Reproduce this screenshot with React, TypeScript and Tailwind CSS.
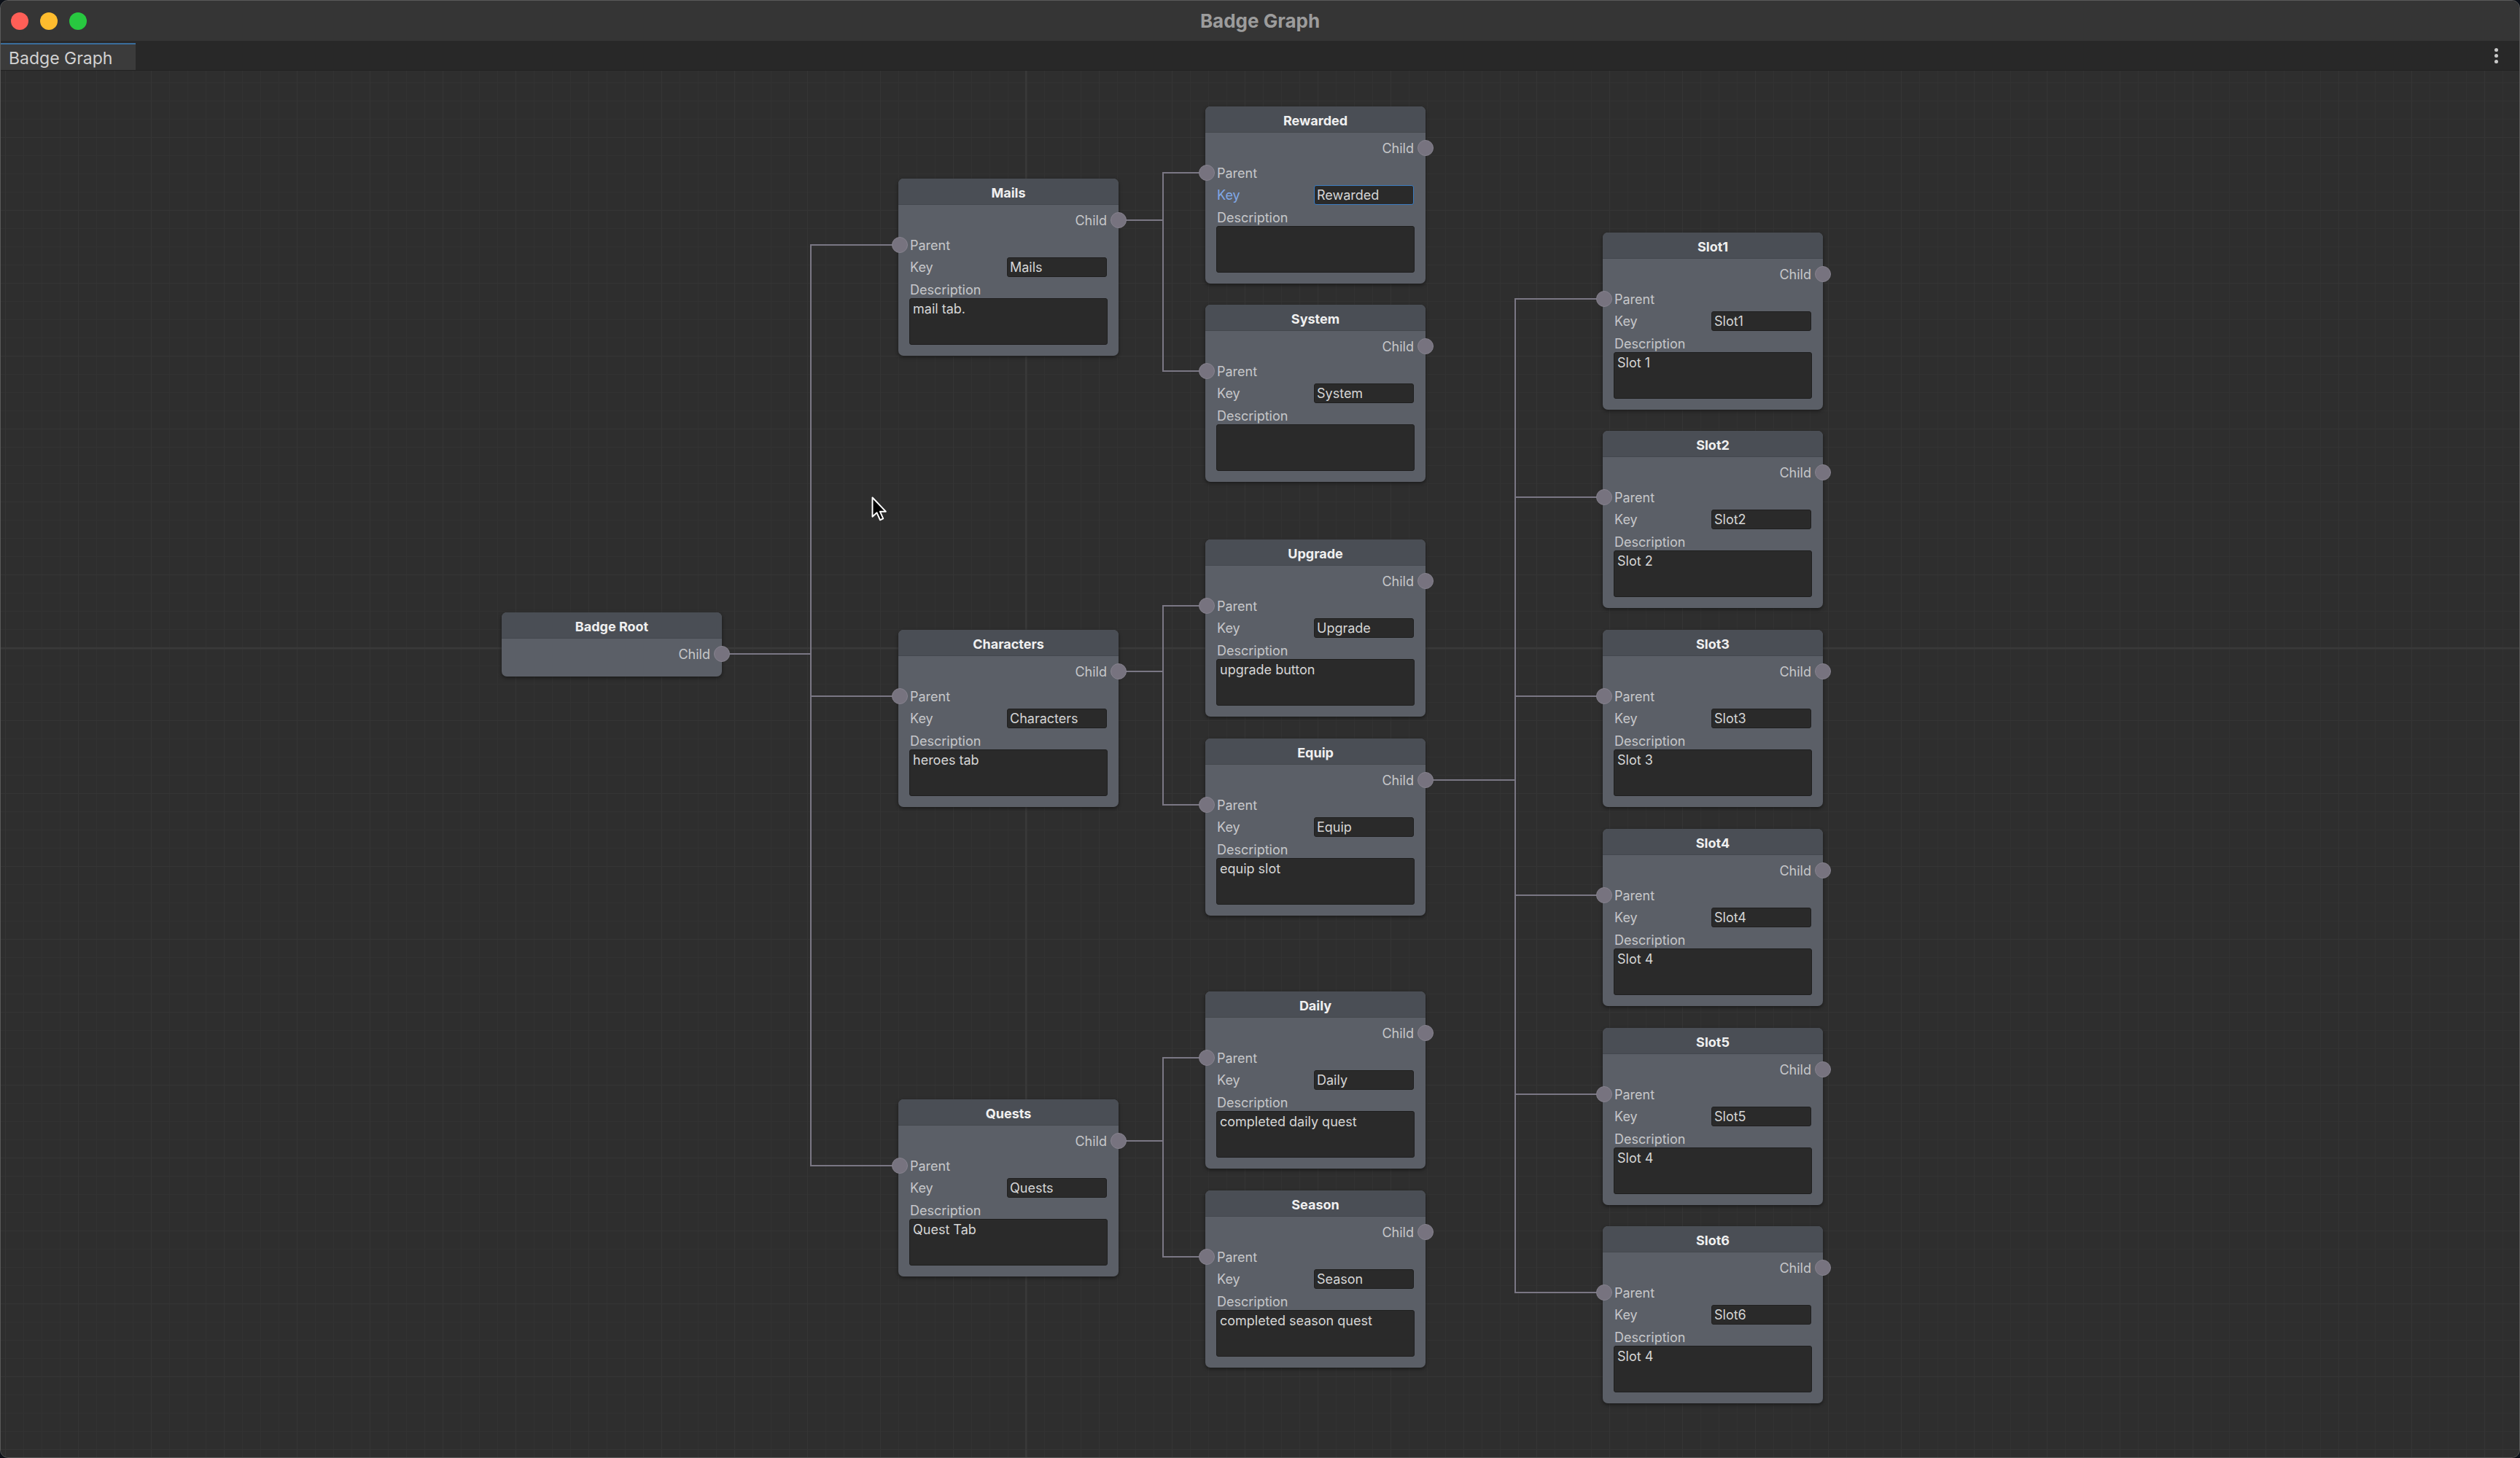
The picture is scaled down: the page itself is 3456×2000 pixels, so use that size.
import React from "react";

type GraphNode = {
  title: string;
  x: number;
  y: number;
  keyValue?: string;
  desc?: string;
  focused?: boolean;
  root?: boolean;
};

const CANVAS_TOP = 97;

const nodes: GraphNode[] = [
  { title: "Badge Root", x: 687, y: 840, root: true },
  { title: "Mails", x: 1231, y: 245, keyValue: "Mails", desc: "mail tab." },
  { title: "Characters", x: 1231, y: 864, keyValue: "Characters", desc: "heroes tab" },
  { title: "Quests", x: 1231, y: 1508, keyValue: "Quests", desc: "Quest Tab" },
  { title: "Rewarded", x: 1652, y: 146, keyValue: "Rewarded", desc: "", focused: true },
  { title: "System", x: 1652, y: 418, keyValue: "System", desc: "" },
  { title: "Upgrade", x: 1652, y: 740, keyValue: "Upgrade", desc: "upgrade button" },
  { title: "Equip", x: 1652, y: 1013, keyValue: "Equip", desc: "equip slot" },
  { title: "Daily", x: 1652, y: 1360, keyValue: "Daily", desc: "completed daily quest" },
  { title: "Season", x: 1652, y: 1633, keyValue: "Season", desc: "completed season quest" },
  { title: "Slot1", x: 2197, y: 319, keyValue: "Slot1", desc: "Slot 1" },
  { title: "Slot2", x: 2197, y: 591, keyValue: "Slot2", desc: "Slot 2" },
  { title: "Slot3", x: 2197, y: 864, keyValue: "Slot3", desc: "Slot 3" },
  { title: "Slot4", x: 2197, y: 1137, keyValue: "Slot4", desc: "Slot 4" },
  { title: "Slot5", x: 2197, y: 1410, keyValue: "Slot5", desc: "Slot 4" },
  { title: "Slot6", x: 2197, y: 1682, keyValue: "Slot6", desc: "Slot 4" },
];

// parent title -> children titles
const links: [string, string[]][] = [
  ["Badge Root", ["Mails", "Characters", "Quests"]],
  ["Mails", ["Rewarded", "System"]],
  ["Characters", ["Upgrade", "Equip"]],
  ["Quests", ["Daily", "Season"]],
  ["Equip", ["Slot1", "Slot2", "Slot3", "Slot4", "Slot5", "Slot6"]],
];

const byTitle = (t: string) => nodes.find((n) => n.title === t)!;

function Port({ side, top }: { side: "left" | "right"; top: number }) {
  return (
    <div
      className={
        "absolute w-[22px] h-[22px] rounded-full bg-[#77737f] border border-[#86828e] " +
        (side === "left" ? "left-[-9px]" : "right-[-11px]")
      }
      style={{ top: top - 11 }}
    />
  );
}

function Node({ n }: { n: GraphNode }) {
  return (
    <div
      className="absolute w-[302px] rounded-[7px] bg-[#5b5f67] shadow-[0_2px_5px_rgba(0,0,0,0.45)] text-[18px] text-[#c6c7ca]"
      style={{ left: n.x, top: n.y - CANVAS_TOP }}
    >
      <div className="h-[36px] pt-[3px] rounded-t-[7px] bg-[#4a4e55] border-b border-[#43474d] flex items-center justify-center font-bold text-[#f0f0f0]">
        {n.title}
      </div>
      <div className="pt-[4px] flex flex-col">
        <div className="h-[34px] flex items-center justify-end pr-[16px]">Child</div>
        {n.root ? (
          <div className="h-[14px]" />
        ) : (
          <>
            <div className="h-[34px] flex items-center pl-[16px]">Parent</div>
            <div className="h-[27px] flex items-center justify-between pl-[16px] pr-[16px]">
              <span className={n.focused ? "text-[#80a8e6]" : ""}>Key</span>
              <div
                className={
                  "w-[137px] h-[27px] rounded-[3px] bg-[#2a2a2a] flex items-center px-[3px] text-[#d6d6d6] border " +
                  (n.focused ? "border-[#3b7bc0]" : "border-[#1f1f1f]")
                }
              >
                {n.keyValue}
              </div>
            </div>
            <div className="h-[29px] pt-[5px] flex items-center pl-[16px]">Description</div>
            <div className="px-[15px] pb-[15px]">
              <div className="h-[64px] rounded-[3px] bg-[#2a2a2a] border border-[#1f1f1f] px-[4px] pt-[2px] leading-[24px] text-[#d6d6d6]">
                {n.desc}
              </div>
            </div>
          </>
        )}
      </div>
      <Port side="right" top={57} />
      {!n.root && <Port side="left" top={91} />}
    </div>
  );
}

function Edges() {
  const paths: string[] = [];
  links.forEach(([from, tos]) => {
    const p = byTitle(from);
    const sx = p.x + 302;
    const sy = p.y + 57 - CANVAS_TOP;
    tos.forEach((t) => {
      const c = byTitle(t);
      const ex = c.x + 2;
      const ey = c.y + 91 - CANVAS_TOP;
      const mx = Math.round((sx + ex) / 2);
      paths.push(`M${sx} ${sy} H${mx} V${ey} H${ex}`);
    });
  });
  return (
    <svg className="absolute inset-0 w-full h-full" fill="none">
      {paths.map((d, i) => (
        <path key={i} d={d} stroke="#7a7784" strokeWidth={2} />
      ))}
    </svg>
  );
}

function Cursor() {
  return (
    <svg
      className="absolute"
      style={{ left: 1194, top: 681 - CANVAS_TOP }}
      width="27"
      height="39"
      viewBox="0 0 18 26"
    >
      <path
        d="M1 1 L1 18.5 L5 14.8 L8 21.5 L10.8 20.3 L7.9 13.8 L13.2 13.8 Z"
        fill="#000"
        stroke="#fff"
        strokeWidth="1.3"
        strokeLinejoin="round"
      />
    </svg>
  );
}

export default function App() {
  return (
    <div className="w-[3456px] h-[2000px] bg-[#0d1118] font-['Inter','Liberation_Sans',sans-serif]">
      <div className="w-full h-full rounded-[11px] border border-[#5a5a5a] overflow-hidden flex flex-col bg-[#2e2e2e]">
        <div className="h-[55px] shrink-0 bg-[#353535] flex items-center relative">
          <div className="flex items-center gap-[16px] pl-[14px]">
            <span className="w-[24px] h-[24px] rounded-full bg-[#fe5f57]" />
            <span className="w-[24px] h-[24px] rounded-full bg-[#febc2e]" />
            <span className="w-[24px] h-[24px] rounded-full bg-[#28c840]" />
          </div>
          <div className="absolute inset-0 flex items-center justify-center font-bold text-[26px] text-[#9c9c9c]">
            Badge Graph
          </div>
        </div>
        <div className="h-[41px] shrink-0 bg-[#282828] border-b border-[#222] flex items-end justify-between">
          <div className="h-[37px] w-[185px] pt-[3px] bg-[#3b3b3b] border-t-2 border-[#3a6d9c] flex items-center pl-[11px] text-[23px] text-[#d2d2d2]">
            Badge Graph
          </div>
          <div className="h-full flex flex-col items-center justify-center gap-[3px] pr-[29px]">
            <span className="w-[5px] h-[5px] rounded-full bg-[#c8c8c8]" />
            <span className="w-[5px] h-[5px] rounded-full bg-[#c8c8c8]" />
            <span className="w-[5px] h-[5px] rounded-full bg-[#c8c8c8]" />
          </div>
        </div>
        <div className="relative flex-1 overflow-hidden bg-[#2e2e2e] bg-[linear-gradient(to_right,#393939_2px,transparent_2px),linear-gradient(to_bottom,#393939_2px,transparent_2px),linear-gradient(to_right,#353535_1px,transparent_1px),linear-gradient(to_bottom,#353535_1px,transparent_1px),linear-gradient(to_right,#323232_1px,transparent_1px),linear-gradient(to_bottom,#323232_1px,transparent_1px)] bg-[size:3456px_2000px,3456px_2000px,100px_100px,100px_100px,25px_25px,25px_25px] bg-[position:1405px_0,0_791px,6px_-9px,6px_-9px,6px_-9px,6px_-9px]">
          <Edges />
          {nodes.map((n) => (
            <Node key={n.title} n={n} />
          ))}
          <Cursor />
        </div>
      </div>
    </div>
  );
}
